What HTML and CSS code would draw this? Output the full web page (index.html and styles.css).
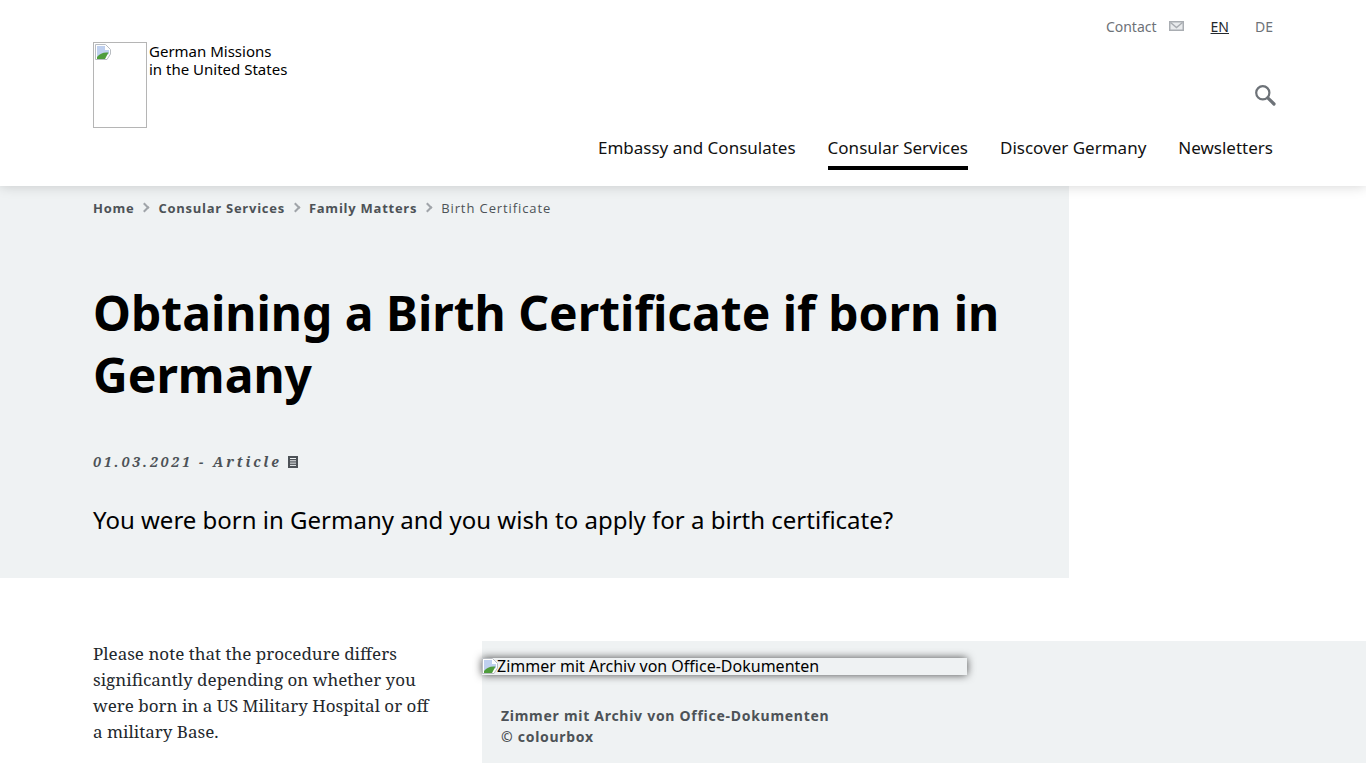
FILE: index.html
```html
<!DOCTYPE html>
<html lang="en">
<head>
<meta charset="utf-8">
<title>Obtaining a Birth Certificate if born in Germany</title>
<link rel="stylesheet" href="styles.css">
</head>
<body>
<header class="site-header">
  <a class="brand" href="#">
    <span class="logo-box">
      <svg class="broken" width="16" height="16" viewBox="0 0 16 16"><path d="M0.5 0.5H10.5L15.5 5.5V10L12 15.5H0.5Z" fill="#fff" stroke="#b9bdc2"/><path d="M2 2H10V6H14V10L2 14Z" fill="#bfd0ef"/><path d="M2 15V13C5 9.5 8 8 13.5 8.5L10 15Z" fill="#4f9d3c"/></svg>
    </span>
    <span class="brand-text">German Missions<br>in the United States</span>
  </a>
  <div class="header-right">
    <div class="meta-nav">
      <a class="contact" href="#">Contact</a>
      <svg class="mail" width="15" height="10" viewBox="0 0 15 10"><rect x="0.75" y="0.75" width="13.5" height="8.5" fill="#e9ebed" stroke="#a9adb2" stroke-width="1.5"/><path d="M1.5 1.5L7.5 6.5L13.5 1.5" fill="none" stroke="#a9adb2" stroke-width="1.5"/></svg>
      <a class="lang active" href="#">EN</a>
      <a class="lang" href="#">DE</a>
    </div>
    <svg class="search" width="22" height="22" viewBox="0 0 22 22"><circle cx="8.8" cy="8.8" r="6.6" fill="none" stroke="#6d7278" stroke-width="2.2"/><path d="M13.8 13.8L20 20" stroke="#6d7278" stroke-width="3.2" stroke-linecap="round"/></svg>
    <nav class="main-nav">
      <a href="#">Embassy and Consulates</a>
      <a class="current" href="#">Consular Services</a>
      <a href="#">Discover Germany</a>
      <a href="#">Newsletters</a>
    </nav>
  </div>
</header>
<main>
  <section class="hero">
    <ol class="crumbs">
      <li><a href="#">Home</a></li>
      <li><a href="#">Consular Services</a></li>
      <li><a href="#">Family Matters</a></li>
      <li class="here">Birth Certificate</li>
    </ol>
    <h1>Obtaining a Birth Certificate if born in Germany</h1>
    <p class="dateline">01.03.2021 - Article
      <svg class="doc" width="10" height="12" viewBox="0 0 10 12"><rect width="10" height="12" fill="#4d5257"/><path d="M2 2.5H8M2 4.8H8M2 7.1H8M2 9.4H8" stroke="#eff2f3" stroke-width="1"/></svg>
    </p>
    <p class="intro">You were born in Germany and you wish to apply for a birth certificate?</p>
  </section>
  <section class="content">
    <p class="body-text">Please note that the procedure differs significantly depending on whether you were born in a US Military Hospital or off a military Base.</p>
    <figure class="media">
      <div class="broken-img">
        <svg class="broken broken-inline" width="16" height="16" viewBox="0 0 16 16"><path d="M0.5 0.5H10.5L15.5 5.5V10L12 15.5H0.5Z" fill="#fff" stroke="#b9bdc2"/><path d="M2 2H10V6H14V10L2 14Z" fill="#bfd0ef"/><path d="M2 15V13C5 9.5 8 8 13.5 8.5L10 15Z" fill="#4f9d3c"/></svg>
        <span>Zimmer mit Archiv von Office-Dokumenten</span>
      </div>
      <figcaption>Zimmer mit Archiv von Office-Dokumenten<br>© colourbox</figcaption>
    </figure>
  </section>
</main>
</body>
</html>
```
FILE: styles.css
```css
* { box-sizing: border-box; }
html, body { margin: 0; height: 768px; overflow: hidden; background: #fff; }
body { font-family: "Noto Sans", "Open Sans", sans-serif; color: #000; }
a { color: inherit; text-decoration: none; }

.site-header {
  position: relative;
  z-index: 2;
  height: 186px;
  padding: 0 91px 0 93px;
  display: flex;
  justify-content: space-between;
  background: #fff;
  box-shadow: 0 0 12px rgba(0, 0, 0, .18);
}
.brand { display: flex; align-items: flex-start; padding-top: 42px; }
.logo-box {
  display: block;
  width: 54px;
  height: 86px;
  border: 1px solid #b5b5b5;
  padding: 1px;
}
.broken { display: block; flex: none; }
.broken-inline { margin-right: -1px; }
.brand-text { margin: 0 0 0 2px; font-size: 15px; line-height: 18px; }

.header-right { display: flex; flex-direction: column; align-items: flex-end; }
.meta-nav {
  display: flex;
  align-items: center;
  margin-top: 16px;
  height: 20px;
  font-size: 14px;
  color: #6d7278;
}
.mail { margin: 0 27px 0 12px; }
.lang { margin-right: 2px; }
.lang.active { color: #23282d; text-decoration: underline; margin-right: 26px; }
.search { margin: 48px -1px 0 0; }
.main-nav { display: flex; gap: 32px; margin: 30px 2px 0 0; font-size: 17px; }
.main-nav a { display: block; height: 34px; line-height: 24px; color: #111; }
.main-nav a.current { border-bottom: 4px solid #000; }

.hero {
  width: 1069px;
  height: 392px;
  padding: 0 0 0 93px;
  background: #eff2f3;
}
.crumbs {
  display: flex;
  list-style: none;
  margin: 0;
  padding: 13px 0 0;
  font-family: "Open Sans", "Noto Sans", sans-serif;
  font-size: 13px;
  line-height: 18px;
  letter-spacing: .74px;
  font-weight: 700;
  color: #4d5257;
}
.crumbs li + li::before {
  content: "";
  display: inline-block;
  width: 5px;
  height: 5px;
  margin: 0 10px 2px 7px;
  border-top: 2px solid #a0a4a9;
  border-right: 2px solid #a0a4a9;
  transform: rotate(45deg);
}
.crumbs .here { font-weight: 400; letter-spacing: .9px; }
h1 {
  margin: 65px 0 0;
  width: 940px;
  font-size: 48px;
  line-height: 62px;
  font-weight: 700;
  color: #000;
}
.dateline {
  margin: 46px 0 0;
  height: 20px;
  font-family: "Noto Serif", "DejaVu Serif", serif;
  font-size: 14px;
  line-height: 20px;
  font-style: italic;
  font-weight: 700;
  letter-spacing: 2.85px;
  color: #4d5257;
}
.doc { margin-left: 0; vertical-align: -1px; }
.intro { margin: 32px 0 0; font-size: 24px; line-height: 32px; }

.content { display: flex; padding-top: 63px; }
.body-text {
  flex: none;
  width: 482px;
  margin: 0;
  padding: 0 50px 0 93px;
  font-family: "Noto Serif", "DejaVu Serif", serif;
  font-size: 17px;
  line-height: 26px;
  color: #23282d;
}
.media {
  flex: 1;
  height: 122px;
  margin: 0;
  background: #eff2f3;
  padding-top: 17px;
}
.broken-img {
  display: flex;
  width: 485px;
  height: 17px;
  font-size: 16px;
  line-height: 17px;
  box-shadow: 0 0 8px rgba(0, 0, 0, .7);
  overflow: visible;
}
figcaption {
  margin: 30px 0 0 19px;
  font-size: 14px;
  line-height: 21px;
  font-weight: 700;
  letter-spacing: .72px;
  color: #4d5257;
}
```
